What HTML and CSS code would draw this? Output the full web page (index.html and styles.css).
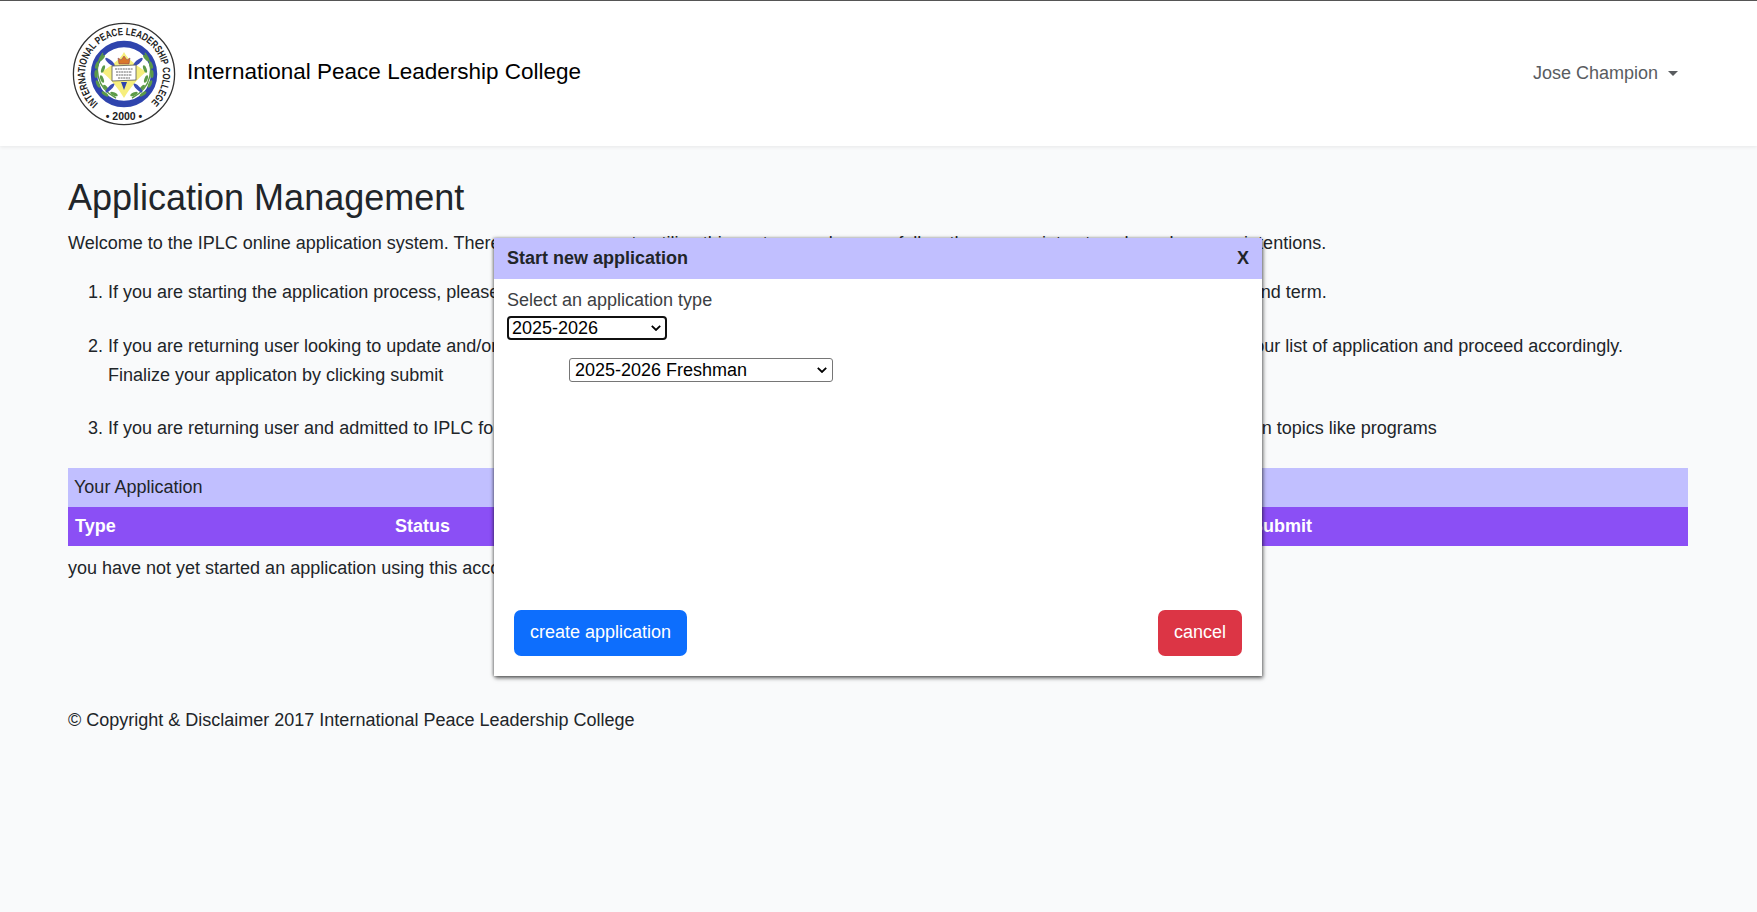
FILE: index.html
```html
<!DOCTYPE html>
<html lang="en">
<head>
<meta charset="utf-8">
<title>Application Management</title>
<link rel="stylesheet" href="styles.css">
</head>
<body>
<nav class="topbar">
  <a class="brand" href="#">
    <svg class="seal" viewBox="0 0 104 104" width="104" height="104" aria-hidden="true">
      <defs>
        <path id="ringTop" d="M27 82 A39 39 0 1 1 77 82"/>
      </defs>
      <circle cx="52" cy="52" r="50.6" fill="#fff" stroke="#333" stroke-width="1.3"/>
      <circle cx="52" cy="52" r="30" fill="#fff" stroke="#2f44ad" stroke-width="6.5"/>
      <path d="M52 30 C56 38 66 44 74 50 C66 56 58 66 52 76 C46 66 38 56 30 50 C38 44 48 38 52 30Z" fill="#f6ee7c"/>
      <g fill="none" stroke="#5c9a48" stroke-width="1.4">
        <path d="M31 31 C21 44 24 66 44 76"/>
        <path d="M73 31 C83 44 80 66 60 76"/>
      </g>
      <g fill="#5c9a48">
        <ellipse cx="30" cy="36" rx="4" ry="1.6" transform="rotate(-50 30 36)"/>
        <ellipse cx="25" cy="43" rx="4" ry="1.6" transform="rotate(-70 25 43)"/>
        <ellipse cx="31" cy="47" rx="4" ry="1.6" transform="rotate(-70 31 47)"/>
        <ellipse cx="24" cy="52" rx="4" ry="1.6" transform="rotate(-90 24 52)"/>
        <ellipse cx="30" cy="57" rx="4" ry="1.6" transform="rotate(70 30 57)"/>
        <ellipse cx="26" cy="62" rx="4" ry="1.6" transform="rotate(65 26 62)"/>
        <ellipse cx="34" cy="66" rx="4" ry="1.6" transform="rotate(50 34 66)"/>
        <ellipse cx="33" cy="72" rx="4" ry="1.6" transform="rotate(35 33 72)"/>
        <ellipse cx="42" cy="72" rx="4" ry="1.6" transform="rotate(25 42 72)"/>
        <ellipse cx="74" cy="36" rx="4" ry="1.6" transform="rotate(50 74 36)"/>
        <ellipse cx="79" cy="43" rx="4" ry="1.6" transform="rotate(70 79 43)"/>
        <ellipse cx="73" cy="47" rx="4" ry="1.6" transform="rotate(70 73 47)"/>
        <ellipse cx="80" cy="52" rx="4" ry="1.6" transform="rotate(90 80 52)"/>
        <ellipse cx="74" cy="57" rx="4" ry="1.6" transform="rotate(-70 74 57)"/>
        <ellipse cx="78" cy="62" rx="4" ry="1.6" transform="rotate(-65 78 62)"/>
        <ellipse cx="70" cy="66" rx="4" ry="1.6" transform="rotate(-50 70 66)"/>
        <ellipse cx="71" cy="72" rx="4" ry="1.6" transform="rotate(-35 71 72)"/>
        <ellipse cx="62" cy="72" rx="4" ry="1.6" transform="rotate(-25 62 72)"/>
      </g>
      <g fill="#3a4cb4">
        <ellipse cx="38" cy="40" rx="6" ry="2" transform="rotate(40 38 40)"/>
        <ellipse cx="66" cy="40" rx="6" ry="2" transform="rotate(-40 66 40)"/>
        <ellipse cx="38" cy="66" rx="6" ry="1.8" transform="rotate(-45 38 66)"/>
        <ellipse cx="66" cy="66" rx="6" ry="1.8" transform="rotate(45 66 66)"/>
      </g>
      <path d="M47 42 L46 36 L49 38 L52 34 L55 38 L58 36 L57 42Z" fill="#d9772b" stroke="#7a3a6a" stroke-width=".5"/>
      <path d="M40 44 L64 43 V58 L40 59Z" fill="#fff" stroke="#555" stroke-width=".8"/>
      <path d="M43 47h18M44 50h16M44 53h16M46 56h12" stroke="#555" stroke-width=".9" stroke-dasharray="2 .6"/>
      <path d="M49 60h6l-3 8z" fill="#2f44ad"/>
      <text class="ring-text"><textPath href="#ringTop" startOffset="1" textLength="187" lengthAdjust="spacingAndGlyphs">INTERNATIONAL PEACE LEADERSHIP COLLEGE</textPath></text>
      <text class="ring-year" x="52" y="97.5" text-anchor="middle">• 2000 •</text>
    </svg>
    <span class="brand-name">International Peace Leadership College</span>
  </a>
  <a class="user" href="#">Jose Champion<span class="caret"></span></a>
</nav>

<main class="content">
  <h1>Application Management</h1>
  <p class="intro">Welcome to the IPLC online application system. There are many ways to utilize this system, <span class="fit-wider">and ensure follow the appropriate steps based on your</span> intentions.</p>
  <ol class="steps">
    <li>If you are starting the application process, please <span class="fit-tight">click the start new application button below, then select your desired program, admission type</span> and term.</li>
    <li>If you are returning user looking to update and/or <span class="fit-wide">complete the application you have already started, please find that application to complete in yo</span>ur list of application and proceed accordingly.<br>Finalize your applicaton by clicking submit</li>
    <li>If you are returning user and admitted to IPLC for <span class="fit-wider">the current academic year, please use the student portal to view and update your information o</span>n topics like programs</li>
  </ol>
  <section class="apps">
    <div class="apps-title">Your Application</div>
    <div class="apps-head">
      <span class="col-type">Type</span>
      <span class="col-status">Status</span>
      <span class="col-submit">Submit</span>
    </div>
    <p class="apps-empty">you have not yet started an application using this account.</p>
  </section>
  <footer class="legal">© Copyright &amp; Disclaimer 2017 International Peace Leadership College</footer>
</main>

<div class="modal" role="dialog">
  <header class="modal-head"><span>Start new application</span><span>X</span></header>
  <div class="modal-body">
    <label class="type-label" for="year">Select an application type</label>
    <select id="year" class="year"><option>2025-2026</option></select>
    <select class="kind"><option>2025-2026 Freshman</option></select>
  </div>
  <div class="modal-foot">
    <button class="btn btn-blue">create application</button>
    <button class="btn btn-red">cancel</button>
  </div>
</div>
</body>
</html>
```
FILE: styles.css
```css
* { box-sizing: border-box; }
html, body { height: 100%; }
body {
  margin: 0;
  background: #f9fafb;
  color: #212529;
  font: 18px/28.8px "Liberation Sans", Arial, sans-serif;
  overflow: hidden;
}
a { text-decoration: none; color: inherit; }
.topbar {
  height: 146px;
  background: #fff;
  border-top: 1px solid #555;
  box-shadow: 0 1px 4px rgba(0,0,0,.08);
  display: flex;
  align-items: center;
  justify-content: space-between;
  padding: 0 79px 0 72px;
}
.brand { display: flex; align-items: center; gap: 11px; color: #000; }
.seal { display: block; }
.ring-text { font: bold 10.5px "Liberation Sans", sans-serif; fill: #222; }
.ring-year { font: bold 10.5px "Liberation Sans", sans-serif; fill: #222; }
.brand-name { font-size: 22.5px; margin-top: -3px; }
.user { color: #595c5f; display: flex; align-items: center; }
.caret {
  margin-left: 10px;
  border-top: 5px solid #595c5f;
  border-left: 5px solid transparent;
  border-right: 5px solid transparent;
}
.content { padding: 30px 69px 0 68px; }
h1 { margin: 0 0 10px; font-size: 36px; font-weight: 400; line-height: 43.2px; }
.intro { margin: 0; }
.fit-wider { word-spacing: .27px; }
.fit-wide { word-spacing: .1px; }
.fit-tight { word-spacing: -.14px; }
.steps { margin: 20px 0 0; padding: 0 0 0 40px; }
.steps li { margin-bottom: 25px; }
.apps-title { height: 39px; background: #c1bfff; padding: 0 6px; line-height: 38px; }
.apps-head {
  height: 39px;
  background: #8b4ff5;
  color: #fff;
  font-weight: 700;
  display: grid;
  grid-template-columns: 320px 856px 1fr;
  padding: 0 7px;
  line-height: 39px;
}
.apps-empty { margin: 8px 0 0; }
.legal { margin-top: 123px; }
.modal {
  position: absolute;
  left: 494px;
  top: 238px;
  width: 768px;
  height: 438px;
  background: #fff;
  box-shadow: 1px 2px 4px rgba(0,0,0,.6), -1px 0 3px rgba(0,0,0,.35);
  display: flex;
  flex-direction: column;
}
.modal-head {
  height: 41px;
  background: #c1bfff;
  font-weight: 700;
  display: flex;
  justify-content: space-between;
  align-items: center;
  padding: 0 13px;
}
.modal-body { flex: 1; padding: 7px 13px 0; display: flex; flex-direction: column; align-items: flex-start; }
.type-label { color: #3c4043; }
select {
  appearance: none;
  font: 18px "Liberation Sans", sans-serif;
  color: #000;
  background: #fff url("data:image/svg+xml,%3Csvg xmlns='http://www.w3.org/2000/svg' width='10' height='6' viewBox='0 0 10 6'%3E%3Cpath d='M.8.8 5 5l4.2-4.2' fill='none' stroke='%23000' stroke-width='1.8'/%3E%3C/svg%3E") no-repeat right 5px center;
}
.year { width: 160px; height: 24px; margin-top: 1px; padding: 0 0 0 3px; border: 2px solid #101010; border-radius: 4px; background-position: right 4px center; }
.kind { width: 264px; height: 24px; margin: 18px 0 0 62px; padding: 0 0 0 5px; border: 1px solid #767676; border-radius: 3px; }
.modal-foot { display: flex; justify-content: space-between; padding: 0 20px 20px; }
.btn { height: 46px; border: 0; border-radius: 7px; color: #fff; font: 18px "Liberation Sans", sans-serif; padding: 0 0 2px; }
.btn-blue { background: #0d6efd; width: 173px; }
.btn-red { background: #dc3545; width: 84px; }
```
